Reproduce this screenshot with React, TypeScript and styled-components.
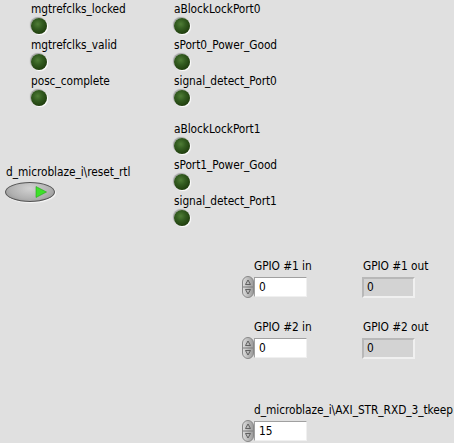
import React from "react";
import styled, { createGlobalStyle } from "styled-components";

const Global = createGlobalStyle`
  html, body { margin: 0; padding: 0; background: #e0e0e0; }
  body {
    font-family: "DejaVu Sans Condensed", "DejaVu Sans", sans-serif;
    font-stretch: condensed;
    font-size: 11.8px;
    letter-spacing: -0.05px;
    color: #000;
  }
`;

const Panel = styled.div`
  width: 454px;
  height: 443px;
  background: #e0e0e0;
  display: flex;
  flex-direction: column;
  overflow: hidden;
`;

const Top = styled.div`
  display: flex;
  padding-top: 1px;
`;

const LeftCol = styled.div`
  width: 174px;
  display: flex;
  flex-direction: column;
`;

const LedStack = styled.div<{ $indent?: number }>`
  display: flex;
  flex-direction: column;
  margin-left: ${(p) => p.$indent ?? 0}px;
`;

const MidCol = styled.div`
  display: flex;
  flex-direction: column;
  gap: 12px;
`;

const LedGroup = styled.div`
  display: flex;
  flex-direction: column;
  height: 36px;
`;

const Label = styled.div<{ $indent?: number }>`
  height: 16px;
  line-height: 16px;
  white-space: nowrap;
  margin-left: ${(p) => p.$indent ?? 0}px;
`;

const Led = styled.div`
  width: 16px;
  height: 16px;
  margin-top: 1px;
  margin-left: 0px;
  border-radius: 50%;
  background: radial-gradient(circle at 42% 38%, #4f7d36 0%, #335c20 35%, #1f3d0d 75%, #17290a 100%);
  box-shadow: 1px 1px 1px #ffffff, -1px -1px 1px #a0a0a0;
`;

const ButtonBlock = styled.div`
  margin-top: 55px;
  margin-left: 6px;
  display: flex;
  flex-direction: column;
`;

const OvalButton = styled.div`
  margin-top: 2px;
  margin-left: -1px;
  width: 50px;
  height: 20px;
  border-radius: 50%;
  border: 1px solid #555;
  box-sizing: border-box;
  background: radial-gradient(ellipse at 50% 30%, #d2d2d2 0%, #b0b0b0 60%, #888 100%);
  box-shadow: 1px 1px 1px #f8f8f8;
  display: flex;
  align-items: center;
  justify-content: flex-end;
  padding-right: 7px;
`;

const Lower = styled.div`
  margin-top: 29px;
  margin-left: 242px;
  display: grid;
  grid-template-columns: 120px auto;
  row-gap: 21px;
`;

const Cell = styled.div<{ $gapAbove?: number }>`
  display: flex;
  flex-direction: column;
  margin-top: ${(p) => p.$gapAbove ?? 0}px;
`;

const ControlRow = styled.div`
  display: flex;
  align-items: center;
  margin-top: 2px;
  height: 22px;
`;

const NumBox = styled.div`
  width: 53px;
  height: 20px;
  box-sizing: border-box;
  background: #ffffff;
  border: 1px solid;
  border-color: #a0a0a0 #f0f0f0 #f0f0f0 #a0a0a0;
  padding-left: 4px;
  line-height: 18px;
`;

const IndBox = styled.div`
  width: 53px;
  height: 21px;
  box-sizing: border-box;
  background: #d3d3d3;
  border: 2px solid;
  border-color: #b8b8b8 #f0f0f0 #f0f0f0 #b8b8b8;
  padding-left: 3px;
  line-height: 17px;
  margin-top: 1px;
`;

const LedItem = ({ label }: { label: string }) => (
  <LedGroup>
    <Label>{label}</Label>
    <Led />
  </LedGroup>
);

const Spinner = () => (
  <svg width="12" height="22" viewBox="0 0 12 22">
    <defs>
      <linearGradient id="sg" x1="0" y1="0" x2="1" y2="0">
        <stop offset="0" stopColor="#dedede" />
        <stop offset="1" stopColor="#9a9a9a" />
      </linearGradient>
    </defs>
    <rect x="0.5" y="0.5" width="11" height="21" rx="5.5" fill="url(#sg)" stroke="#888" />
    <line x1="1" y1="11" x2="11" y2="11" stroke="#7c7c7c" />
    <path d="M3.5 8.5 L6 4 L8.5 8.5 Z" fill="none" stroke="#555" strokeWidth="0.9" />
    <path d="M3.5 13.5 L6 18 L8.5 13.5 Z" fill="none" stroke="#555" strokeWidth="0.9" />
  </svg>
);

const Control = ({ label, value }: { label: string; value: string }) => (
  <>
    <Label $indent={12}>{label}</Label>
    <ControlRow>
      <Spinner />
      <NumBox>{value}</NumBox>
    </ControlRow>
  </>
);

const Indicator = ({ label, value }: { label: string; value: string }) => (
  <>
    <Label $indent={1}>{label}</Label>
    <ControlRow>
      <IndBox>{value}</IndBox>
    </ControlRow>
  </>
);

export default function App() {
  return (
    <Panel>
      <Global />
      <Top>
        <LeftCol>
          <LedStack $indent={31}>
            <LedItem label="mgtrefclks_locked" />
            <LedItem label="mgtrefclks_valid" />
            <LedItem label="posc_complete" />
          </LedStack>
          <ButtonBlock>
            <Label>d_microblaze_i\reset_rtl</Label>
            <OvalButton>
              <svg width="12" height="12" viewBox="0 0 12 12">
                <path d="M1 0.5 L11.5 6 L1 11.5 Z" fill="#3ee02a" stroke="#24a818" strokeWidth="0.6" />
              </svg>
            </OvalButton>
          </ButtonBlock>
        </LeftCol>
        <MidCol>
          <LedStack>
            <LedItem label="aBlockLockPort0" />
            <LedItem label="sPort0_Power_Good" />
            <LedItem label="signal_detect_Port0" />
          </LedStack>
          <LedStack>
            <LedItem label="aBlockLockPort1" />
            <LedItem label="sPort1_Power_Good" />
            <LedItem label="signal_detect_Port1" />
          </LedStack>
        </MidCol>
      </Top>
      <Lower>
        <Cell>
          <Control label="GPIO #1 in" value="0" />
        </Cell>
        <Cell>
          <Indicator label="GPIO #1 out" value="0" />
        </Cell>
        <Cell>
          <Control label="GPIO #2 in" value="0" />
        </Cell>
        <Cell>
          <Indicator label="GPIO #2 out" value="0" />
        </Cell>
        <Cell $gapAbove={22}>
          <Control label="d_microblaze_i\AXI_STR_RXD_3_tkeep" value="15" />
        </Cell>
      </Lower>
    </Panel>
  );
}
